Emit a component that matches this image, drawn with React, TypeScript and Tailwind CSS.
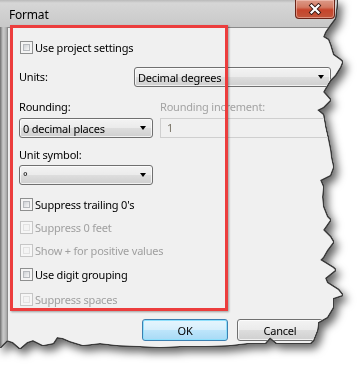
import React from "react";

const UI_FONT = "font-['Noto_Sans','Liberation_Sans',sans-serif] text-[11px] tracking-[-0.2px]";

function CheckRow({ label, disabled, className }: { label: string; disabled?: boolean; className?: string }) {
  return (
    <div className={"ml-px flex h-[13px] items-center gap-[2px] " + (className ?? "")}>
      <span
        className={
          "block h-[13px] w-[13px] shrink-0 border p-[2px] " +
          (disabled ? "border-[#c6c6c6] bg-[#f6f6f6]" : "border-[#8e8f8f] bg-[#f4f4f4]")
        }
      >
        <span
          className={
            "block h-full w-full border " +
            (disabled
              ? "border-[#e2e2e2] bg-[#f4f4f4]"
              : "border-[#b6b9bd] bg-[linear-gradient(135deg,#cfd2d6,#f7f7f7)]")
          }
        />
      </span>
      <span className={"leading-[13px] " + (disabled ? "text-[#a0a0a0]" : "text-black")}>{label}</span>
    </div>
  );
}

function Combo({ value, className }: { value: string; className?: string }) {
  return (
    <div
      className={
        "flex h-[20px] items-center rounded-[3px] border border-[#707070] bg-[linear-gradient(#f3f3f3_0%,#ebebeb_48%,#dddddd_52%,#cfcfcf_100%)] pl-[3px] shadow-[inset_0_0_0_1px_rgba(255,255,255,0.7)] " +
        (className ?? "")
      }
    >
      <span className="leading-none text-black">{value}</span>
      <span className="ml-auto mr-[6px] h-0 w-0 border-x-[3.5px] border-t-[4px] border-x-transparent border-t-black" />
    </div>
  );
}

function CloseButton() {
  return (
    <div className="mr-[11px] flex h-[19px] w-[40px] items-center justify-center rounded-b-[4px] border border-t-0 border-[#6a2418] bg-[linear-gradient(#dc9a88_0%,#d37a63_40%,#c6442b_55%,#c2563b_100%)] shadow-[inset_0_0_0_1px_rgba(255,220,210,0.45)]">
      <svg width="14" height="12" viewBox="0 0 14 12">
        <path d="M3.5 2.5 L10.5 9.5 M10.5 2.5 L3.5 9.5" stroke="#3b1a14" strokeWidth="4" strokeLinecap="square" />
        <path d="M3.5 2.5 L10.5 9.5 M10.5 2.5 L3.5 9.5" stroke="#ffffff" strokeWidth="2.2" strokeLinecap="square" />
      </svg>
    </div>
  );
}

export default function App() {
  return (
    <div className={"relative h-[376px] w-[364px] overflow-hidden bg-white " + UI_FONT}>
      <div className="[filter:drop-shadow(1px_0_0_#3c3c3c)_drop-shadow(0_1px_0_#3c3c3c)_drop-shadow(-1px_0_0_#3c3c3c)_drop-shadow(0_-1px_0_#3c3c3c)_drop-shadow(4px_5px_4px_rgba(0,0,0,0.6))]">
        <div className="relative h-[350px] w-[346px] [clip-path:polygon(0_0,337px_0,336px_10px,335px_18px,329px_26px,325px_32px,323px_37px,328px_40px,330px_45px,333px_55px,340px_60px,342px_62px,340px_67px,335px_75px,330px_80px,327px_85px,323px_92px,330px_100px,323px_107px,317px_110px,323px_115px,324px_121px,325px_127px,328px_140px,330px_150px,331px_158px,333px_167px,330px_175px,320px_180px,323px_187px,322px_197px,323px_207px,327px_217px,330px_220px,323px_230px,330px_237px,333px_242px,327px_250px,323px_257px,320px_260px,333px_268px,335px_270px,325px_278px,327px_283px,338px_290px,342px_295px,333px_298px,333px_307px,327px_317px,318px_322px,317px_330px,315px_335px,313px_340px,310px_343px,290px_343px,277px_343px,270px_337px,265px_343px,247px_343px,230px_345px,205px_346px,180px_346px,160px_347px,140px_346px,117px_345px,100px_343px,83px_345px,70px_341px,63px_338px,57px_337px,53px_343px,43px_345px,33px_340px,27px_342px,20px_348px,13px_342px,7px_340px,0_347px)]">
          <div className="flex h-full flex-col bg-[linear-gradient(90deg,#c4c4c4,#d2d2d2_40%,#cacaca_70%,#bebebe)]">
            {/* title bar */}
            <div className="flex h-[27px] shrink-0 items-start bg-[linear-gradient(180deg,#b9b9b9_0px,#d6d6d6_3px,#d0d0d0_14px,#c8c8c8_27px)]">
              <span className="ml-[9px] mt-[7px] text-[12px] leading-[15px] text-black">Format</span>
              <div className="ml-auto">
                <CloseButton />
              </div>
            </div>
            {/* frame + client */}
            <div className="flex flex-1">
              <div className="w-[7px] shrink-0 bg-[linear-gradient(90deg,#6e6e6e_0px,#8d8d8d_1px,#c9c9c9_3px,#bdbdbd_5px,#a2a2a2_7px)]" />
              <div className="flex flex-1 flex-col border-l border-t border-[#8a8a8a] bg-[#f0f0f0] pl-[11px]">
                <CheckRow label="Use project settings" className="mt-[13px]" />

                <div className="mt-[13px] flex h-[20px] items-center">
                  <span className="w-[115px] shrink-0 text-black">Units:</span>
                  <Combo value="Decimal degrees" className="w-[197px]" />
                </div>

                <div className="mt-[13px] flex h-[15px] items-center">
                  <span className="w-[141px] shrink-0 text-black">Rounding:</span>
                  <span className="text-[#a3a3a3]">Rounding increment:</span>
                </div>

                <div className="mt-[3px] flex h-[20px] items-center">
                  <Combo value="0 decimal places" className="w-[134px] shrink-0" />
                  <div className="ml-[7px] flex h-[20px] w-[190px] shrink-0 items-center border border-[#cfcfcf] bg-[#f0f0f0] pl-[6px] text-[#7a7467]">
                    1
                  </div>
                </div>

                <div className="mt-[10px] flex h-[15px] items-center text-black">Unit symbol:</div>

                <Combo value="°" className="mt-[2px] w-[134px]" />

                <CheckRow label="Suppress trailing 0's" className="mt-[13px]" />
                <CheckRow label="Suppress 0 feet" disabled className="mt-[10px]" />
                <CheckRow label="Show + for positive values" disabled className="mt-[10px]" />
                <CheckRow label="Use digit grouping" className="mt-[11px]" />
                <CheckRow label="Suppress spaces" disabled className="mt-[12px]" />

                <div className="ml-[123px] mt-[13px] flex gap-[9px]">
                  <button className="h-[22px] w-[86px] rounded-[3px] border border-[#3c7fb1] bg-[linear-gradient(#e6f5fd_0%,#d6effc_48%,#bde5fb_52%,#a8daf5_100%)] leading-none text-black shadow-[inset_0_0_0_1px_#8fe0fc]">
                    OK
                  </button>
                  <button className="h-[22px] w-[86px] rounded-[3px] border border-[#707070] bg-[linear-gradient(#f3f3f3_0%,#ebebeb_48%,#dddddd_52%,#cfcfcf_100%)] leading-none text-black shadow-[inset_0_0_0_1px_rgba(255,255,255,0.7)]">
                    Cancel
                  </button>
                </div>
              </div>
            </div>
          </div>

          {/* red highlight annotation */}
          <div className="pointer-events-none absolute left-[10px] top-[25px] h-[286px] w-[218px] border-[3px] border-[#ec3d3d] shadow-[1px_1px_2px_rgba(0,0,0,0.35)]" />
        </div>
      </div>
    </div>
  );
}
